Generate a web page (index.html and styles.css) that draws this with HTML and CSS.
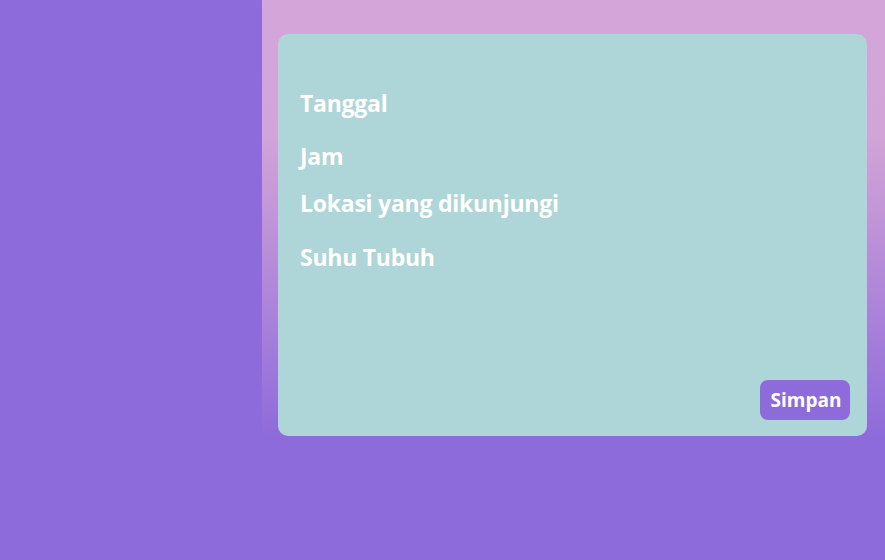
FILE: index.html
```html
<!DOCTYPE html>
<html lang="id">
<head>
<meta charset="utf-8">
<title>Catatan Perjalanan</title>
<link rel="stylesheet" href="styles.css">
</head>
<body>
<div class="app">
  <aside class="sidebar"></aside>
  <main class="main">
    <section class="card">
      <div class="fields">
        <div class="field field-a">Tanggal</div>
        <div class="field field-b">Jam</div>
        <div class="field field-c">Lokasi yang dikunjungi</div>
        <div class="field">Suhu Tubuh</div>
      </div>
      <div class="actions">
        <button class="btn">Simpan</button>
      </div>
    </section>
  </main>
</div>
</body>
</html>
```
FILE: styles.css
```css
html, body {
  margin: 0;
  padding: 0;
  background: #8e6bdb;
  font-family: "Open Sans", "Lato", sans-serif;
}
.app {
  display: flex;
  width: 885px;
  height: 560px;
  background: #8e6bdb;
}
.sidebar {
  width: 262px;
  flex-shrink: 0;
  background: #8e6bdb;
}
.main {
  flex: 1;
  align-self: flex-start;
  height: 452px;
  box-sizing: border-box;
  padding: 34px 18px 16px 16px;
  background: linear-gradient(to bottom, #d4a5d8 0%, #d3a4d7 30%, #8e6bdb 97%);
}
.card {
  height: 402px;
  box-sizing: border-box;
  background: #aed5d8;
  border-radius: 10px;
  padding: 56px 17px 16px 22px;
  display: flex;
  flex-direction: column;
}
.fields {
  flex: 1;
  display: flex;
  flex-direction: column;
}
.field {
  color: #ffffff;
  font-weight: 700;
  font-size: 23px;
  line-height: 26px;
  letter-spacing: -0.25px;
}
.field-a { margin-bottom: 27px; }
.field-b { margin-bottom: 21px; }
.field-c { margin-bottom: 28px; }
.actions {
  display: flex;
  justify-content: flex-end;
}
.btn {
  width: 90px;
  height: 40px;
  border: none;
  border-radius: 8px;
  background: #8e6bdb;
  color: #ffffff;
  font-family: "Open Sans", "Lato", sans-serif;
  font-weight: 700;
  font-size: 19px;
  padding: 0 0 0 2px;
  cursor: pointer;
}
```
